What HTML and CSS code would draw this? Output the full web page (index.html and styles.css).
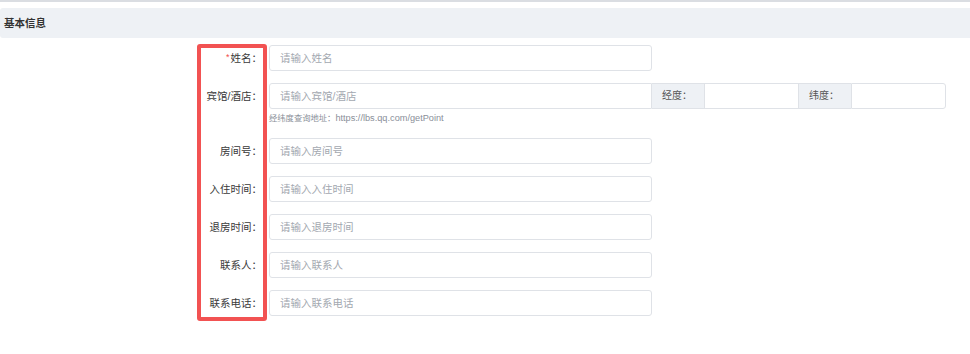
FILE: index.html
```html
<!DOCTYPE html>
<html lang="zh-CN">
  <head>
    <meta charset="UTF-8" />
    <meta name="viewport" content="width=device-width, initial-scale=1.0" />
    <title>基本信息</title>
    <link rel="stylesheet" href="styles.css">
  </head>
  <body>
    <div class="top-line"></div>

    <div class="panel-head">基本信息</div>

    <form class="form">
      <!-- 标注框 -->
      <div class="mark-box"></div>

      <div class="form-row">
        <label class="form-label"><span class="required">*</span>姓名：</label>
        <input class="form-input" type="text" placeholder="请输入姓名" />
      </div>

      <div class="form-row has-help">
        <label class="form-label">宾馆/酒店：</label>
        <div class="field">
          <div class="input-group">
            <input class="form-input" type="text" placeholder="请输入宾馆/酒店" />
            <span class="addon">经度：</span>
            <input class="form-input small" type="text" />
            <span class="addon">纬度：</span>
            <input class="form-input small last" type="text" />
          </div>
          <div class="help">经纬度查询地址：<span class="url">https://lbs.qq.com/getPoint</span></div>
        </div>
      </div>

      <div class="form-row">
        <label class="form-label">房间号：</label>
        <input class="form-input" type="text" placeholder="请输入房间号" />
      </div>

      <div class="form-row">
        <label class="form-label">入住时间：</label>
        <input class="form-input" type="text" placeholder="请输入入住时间" />
      </div>

      <div class="form-row">
        <label class="form-label">退房时间：</label>
        <input class="form-input" type="text" placeholder="请输入退房时间" />
      </div>

      <div class="form-row">
        <label class="form-label">联系人：</label>
        <input class="form-input" type="text" placeholder="请输入联系人" />
      </div>

      <div class="form-row">
        <label class="form-label">联系电话：</label>
        <input class="form-input" type="text" placeholder="请输入联系电话" />
      </div>
    </form>
  </body>
</html>
```

FILE: styles.css
```css
body {
  font-family: "Liberation Sans", "Noto Sans CJK SC", sans-serif;
  margin: 0;
  padding: 0;
  background-color: #fff;
  color: #333;
}

.top-line {
  height: 2px;
  background-color: #dadde2;
}

.panel-head {
  margin-top: 6px;
  height: 30px;
  line-height: 30px;
  padding-left: 4px;
  background-color: #eef1f5;
  border-radius: 3px 0 0 3px;
  font-size: 10.5px;
  font-weight: bold;
  color: #333;
}

.form {
  position: relative;
  margin-top: 7px;
}

.mark-box {
  position: absolute;
  left: 197px;
  top: -1px;
  width: 62px;
  height: 269px;
  border: 4px solid #f25252;
  border-radius: 3px;
  pointer-events: none;
}

.form-row {
  display: flex;
  align-items: flex-start;
  margin-bottom: 12px;
}

.form-label {
  width: 262px;
  flex-shrink: 0;
  padding-right: 7px;
  text-align: right;
  font-size: 10.5px;
  line-height: 26px;
  color: #3a3a3a;
}
.required {
  color: #f24b4b;
  font-size: 9px;
  vertical-align: top;
  line-height: 24px;
  margin-right: 1px;
}

.form-input {
  box-sizing: border-box;
  width: 383px;
  height: 26px;
  padding: 0 10px;
  font-family: inherit;
  font-size: 10.5px;
  color: #333;
  border: 1px solid #dfe2e7;
  border-radius: 3px;
  outline: none;
}
.form-input::placeholder {
  color: #a3a8b0;
}

.input-group {
  display: flex;
}
.input-group .form-input {
  border-radius: 3px 0 0 3px;
}
.input-group .small {
  width: 95px;
  border-radius: 0;
}
.input-group .last {
  border-radius: 0 3px 3px 0;
}
.addon {
  box-sizing: border-box;
  width: 52px;
  height: 26px;
  line-height: 24px;
  padding-left: 10px;
  font-size: 10px;
  color: #555;
  background-color: #eef1f5;
  border: 1px solid #dfe2e7;
  border-left: none;
  border-right: none;
}

.help {
  height: 17px;
  padding-top: 3px;
  box-sizing: border-box;
  font-size: 8.3px;
  line-height: 12px;
  color: #8a8f99;
}
.help .url {
  font-size: 9.2px;
}
```
